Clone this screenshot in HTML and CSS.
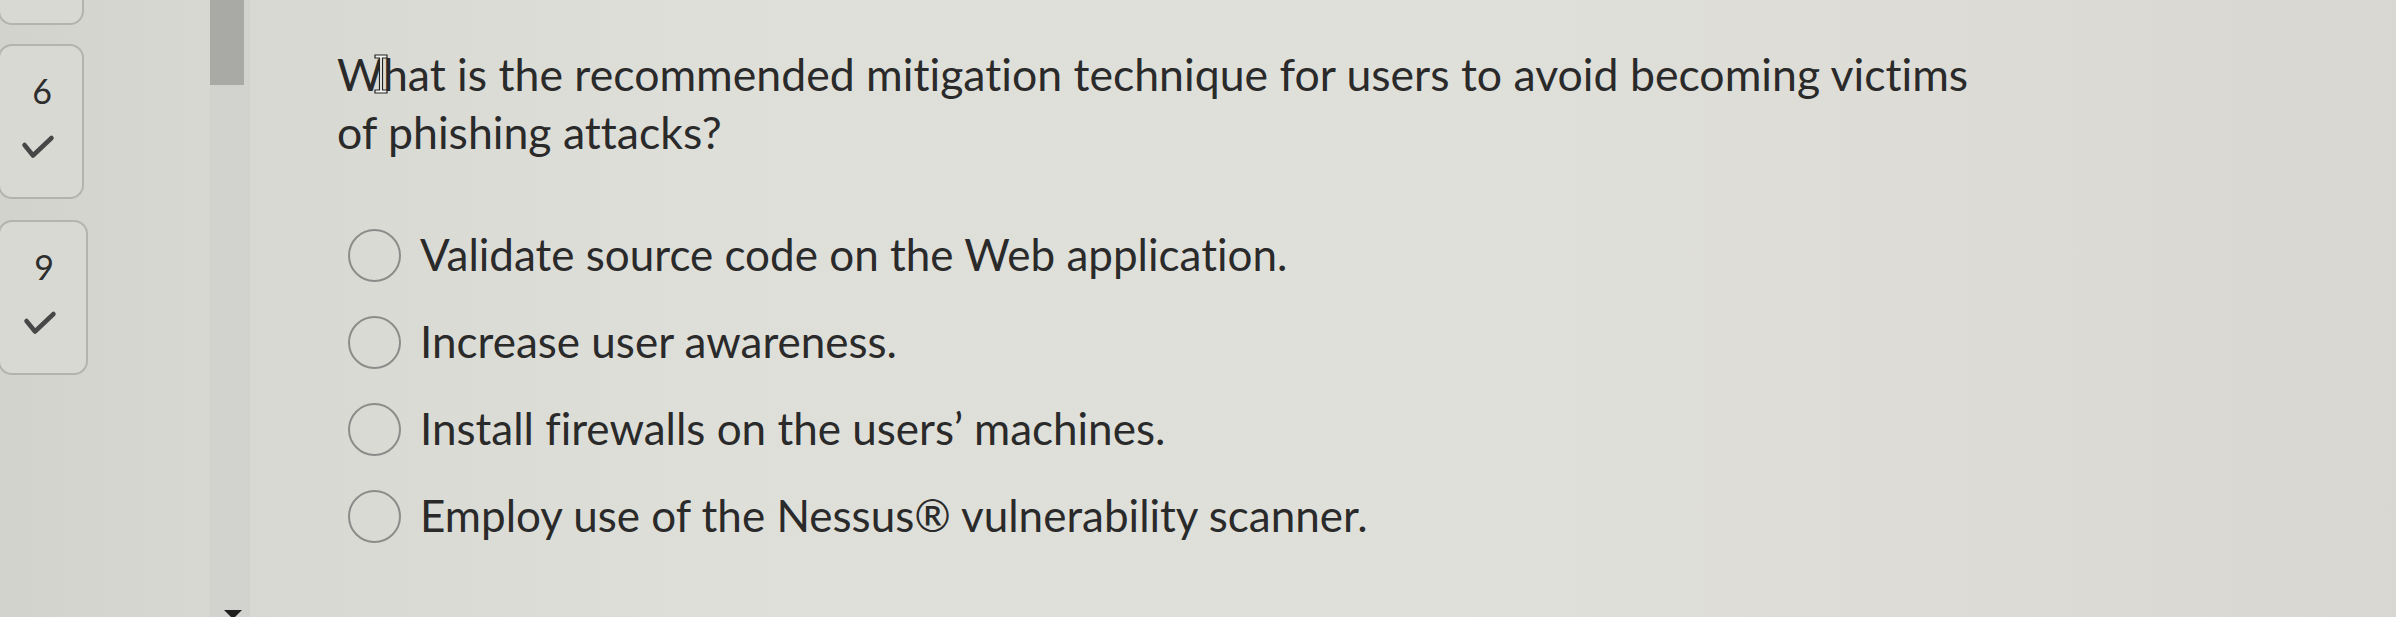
FILE: index.html
```html
<!DOCTYPE html>
<html lang="en">
<head>
<meta charset="utf-8">
<title>Question</title>
<link rel="stylesheet" href="styles.css">
</head>
<body>
<div class="page">
  <aside class="nav">
    <div class="card card-partial"></div>
    <div class="card">
      <span class="num">6</span>
      <svg class="check" viewBox="0 0 34 26" width="34" height="26"><path d="M3.5 11 L12 21.5 L30.5 4" fill="none" stroke="#474747" stroke-width="4.5" stroke-linecap="round" stroke-linejoin="round"/></svg>
    </div>
    <div class="card card-wide">
      <span class="num">9</span>
      <svg class="check" viewBox="0 0 34 26" width="34" height="26"><path d="M3.5 11 L12 21.5 L30.5 4" fill="none" stroke="#474747" stroke-width="4.5" stroke-linecap="round" stroke-linejoin="round"/></svg>
    </div>
  </aside>
  <div class="scroll">
    <div class="thumb"></div>
    <div class="arrow"></div>
  </div>
  <main class="question">
    <p class="prompt">What is the recommended mitigation technique for users to avoid becoming victims of phishing attacks?<svg class="ibeam" viewBox="0 0 14 40" width="14" height="40"><path d="M1 1 H13 V4 H8.5 V36 H13 V39 H1 V36 H5.5 V4 H1 Z" fill="#f4f4f0" stroke="#222" stroke-width="1.2"/></svg></p>
    <ul class="options">
      <li class="option"><span class="radio"></span><span class="label">Validate source code on the Web application.</span></li>
      <li class="option"><span class="radio"></span><span class="label">Increase user awareness.</span></li>
      <li class="option"><span class="radio"></span><span class="label">Install firewalls on the users’ machines.</span></li>
      <li class="option"><span class="radio"></span><span class="label">Employ use of the Nessus® vulnerability scanner.</span></li>
    </ul>
  </main>
</div>
</body>
</html>
```

FILE: styles.css
```css
html, body {
  margin: 0;
  padding: 0;
  height: 100%;
}
body {
  font-family: Lato, "Open Sans", "Liberation Sans", sans-serif;
  font-variant-ligatures: none;
  font-feature-settings: "liga" 0, "clig" 0;
  color: #2a2a2a;
  background: linear-gradient(to right, #d3d3ce 0%, #d8d8d3 9%, #dfdfda 30%, #e0e0db 60%, #dcdbd5 85%, #d8d7d1 100%);
  overflow: hidden;
}
.page {
  display: flex;
  height: 617px;
}
.nav {
  width: 210px;
  flex: none;
  display: flex;
  flex-direction: column;
  gap: 21px;
  overflow: hidden;
}
.card {
  flex: none;
  box-sizing: border-box;
  width: 86px;
  height: 155px;
  margin-left: -2px;
  border: 2px solid #b4b4af;
  border-radius: 14px;
  display: flex;
  flex-direction: column;
  align-items: center;
  padding-top: 27px;
  gap: 25px;
  background: #d9d9d4;
}
.card-wide {
  width: 90px;
}
.card-partial {
  margin-top: -130px;
  margin-bottom: -2px;
  padding-top: 0;
}
.num {
  font-size: 34px;
  line-height: 36px;
  color: #2e2e2e;
  margin-left: 2px;
}
.check {
  display: block;
  margin-left: -6px;
}
.scroll {
  width: 40px;
  flex: none;
  background: #d2d2ce;
  display: flex;
  flex-direction: column;
  justify-content: space-between;
  align-items: flex-start;
}
.thumb {
  width: 34px;
  height: 85px;
  background: #a9a9a6;
}
.arrow {
  width: 0;
  height: 0;
  border-left: 9px solid transparent;
  border-right: 9px solid transparent;
  border-top: 9px solid #1e1e1e;
  margin-left: 14px;
  margin-bottom: -2px;
}
.question {
  flex: 1;
  padding-left: 87px;
  padding-top: 45px;
}
.prompt {
  position: relative;
  margin: 0;
  max-width: 1645px;
  font-size: 44.6px;
  line-height: 58px;
}
.ibeam {
  position: absolute;
  left: 37px;
  top: 9px;
}
.options {
  list-style: none;
  margin: 68px 0 0;
  padding: 0;
  display: flex;
  flex-direction: column;
  gap: 33px;
}
.option {
  display: flex;
  align-items: flex-start;
  gap: 19px;
  height: 54px;
}
.radio {
  flex: none;
  box-sizing: border-box;
  width: 53px;
  height: 53px;
  border: 2px solid #8c8c8a;
  border-radius: 50%;
  margin-left: 11px;
}
.label {
  font-size: 44px;
  line-height: 50px;
}
```
